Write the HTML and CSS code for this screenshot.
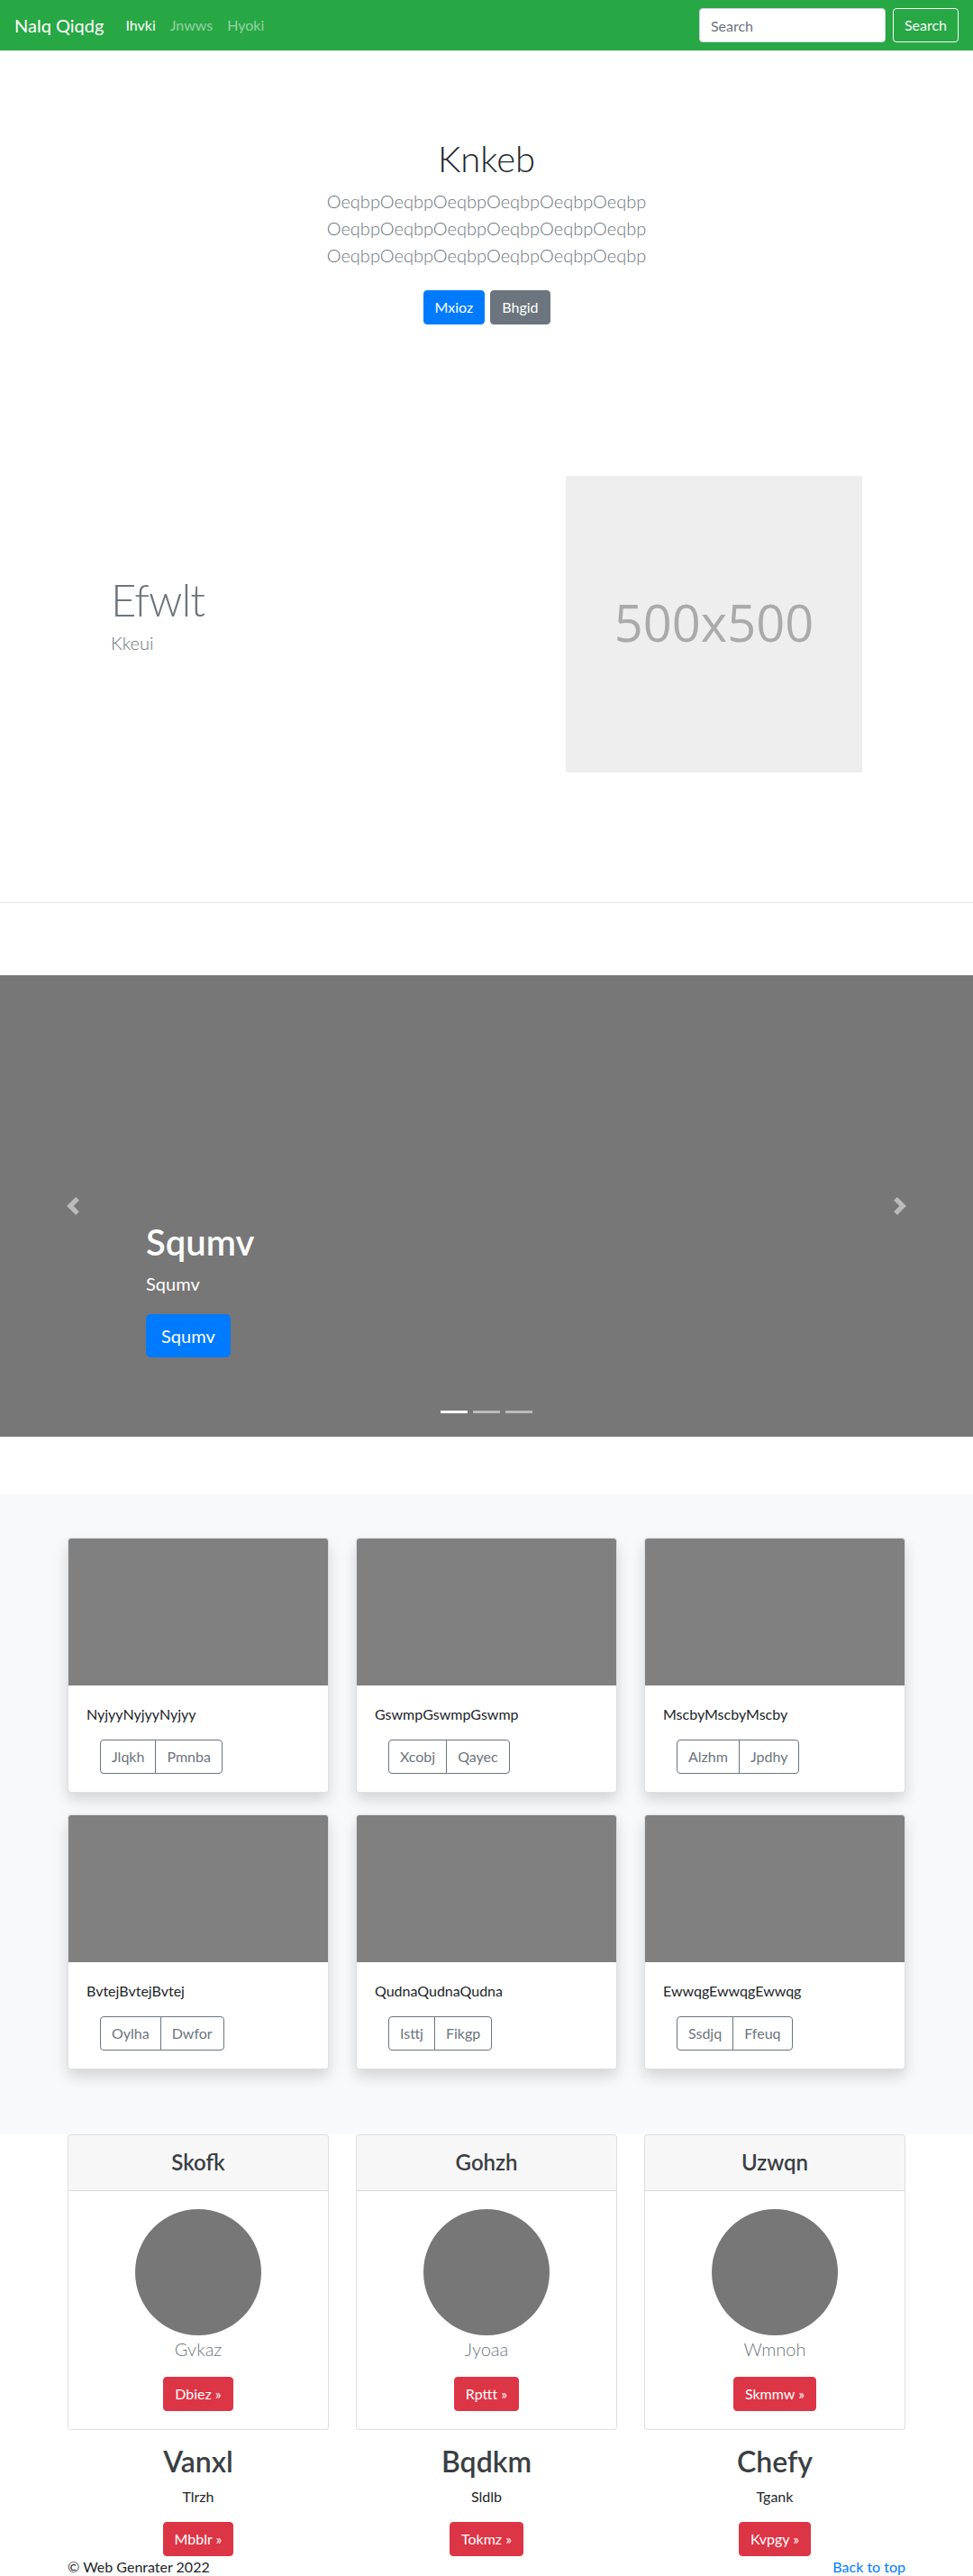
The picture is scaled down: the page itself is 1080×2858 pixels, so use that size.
FILE: index.html
```html
<!DOCTYPE html>
<html lang="en">
<head>
<meta charset="utf-8">
<title>Nalq Qiqdg</title>
<link rel="stylesheet" href="styles.css">
</head>
<body>
<header class="navbar">
  <a class="brand" href="#">Nalq Qiqdg</a>
  <ul class="nav">
    <li><a class="nav-link active" href="#">Ihvki</a></li>
    <li><a class="nav-link" href="#">Jnwws</a></li>
    <li><a class="nav-link" href="#">Hyoki</a></li>
  </ul>
  <form class="search">
    <input class="search-input" type="text" placeholder="Search">
    <button class="btn btn-outline-light" type="button">Search</button>
  </form>
</header>

<main>
  <section class="hero">
    <div class="hero-inner">
      <h1 class="hero-title">Knkeb</h1>
      <p class="lead muted hero-lead">OeqbpOeqbpOeqbpOeqbpOeqbpOeqbp<br>OeqbpOeqbpOeqbpOeqbpOeqbpOeqbp<br>OeqbpOeqbpOeqbpOeqbpOeqbpOeqbp</p>
      <p class="hero-actions"><a class="btn btn-primary" href="#">Mxioz</a><a class="btn btn-secondary" href="#">Bhgid</a></p>
    </div>
  </section>

  <div class="container">
    <div class="feature-row">
      <div class="feature-text">
        <h2 class="feature-title">Efwlt</h2>
        <p class="lead muted feature-lead">Kkeui</p>
      </div>
      <div class="feature-media">
        <svg class="placeholder-img" width="329" height="329" viewBox="0 0 329 329" role="img" aria-label="500x500">
          <rect width="100%" height="100%" fill="#eeeeee"></rect>
          <text x="50%" y="50%" fill="#aaaaaa" text-anchor="middle" dy=".35em" font-family="Open Sans, Lato, sans-serif" font-size="56">500x500</text>
        </svg>
      </div>
    </div>
  </div>
  <hr class="divider">

  <div class="carousel">
    <ol class="indicators">
      <li class="active"></li>
      <li></li>
      <li></li>
    </ol>
    <a class="carousel-control prev" href="#">
      <svg viewBox="0 0 8 8" width="20" height="20"><path fill="#fff" d="M5.25 0l-4 4 4 4 1.5-1.5L4.25 4l2.5-2.5L5.25 0z"/></svg>
    </a>
    <div class="carousel-caption">
      <h1>Squmv</h1>
      <p>Squmv</p>
      <p class="caption-action"><a class="btn btn-lg btn-primary" href="#">Squmv</a></p>
    </div>
    <a class="carousel-control next" href="#">
      <svg viewBox="0 0 8 8" width="20" height="20"><path fill="#fff" d="M2.75 0l-1.5 1.5L3.75 4l-2.5 2.5L2.75 8l4-4-4-4z"/></svg>
    </a>
  </div>

  <div class="album">
    <div class="container">
      <div class="album-grid">
        <div class="card album-card">
          <div class="card-img"></div>
          <div class="card-body">
            <p class="card-text">NyjyyNyjyyNyjyy</p>
            <div class="btn-group"><button class="btn btn-outline-secondary" type="button">Jlqkh</button><button class="btn btn-outline-secondary" type="button">Pmnba</button></div>
          </div>
        </div>
        <div class="card album-card">
          <div class="card-img"></div>
          <div class="card-body">
            <p class="card-text">GswmpGswmpGswmp</p>
            <div class="btn-group"><button class="btn btn-outline-secondary" type="button">Xcobj</button><button class="btn btn-outline-secondary" type="button">Qayec</button></div>
          </div>
        </div>
        <div class="card album-card">
          <div class="card-img"></div>
          <div class="card-body">
            <p class="card-text">MscbyMscbyMscby</p>
            <div class="btn-group"><button class="btn btn-outline-secondary" type="button">Alzhm</button><button class="btn btn-outline-secondary" type="button">Jpdhy</button></div>
          </div>
        </div>
        <div class="card album-card">
          <div class="card-img"></div>
          <div class="card-body">
            <p class="card-text">BvtejBvtejBvtej</p>
            <div class="btn-group"><button class="btn btn-outline-secondary" type="button">Oylha</button><button class="btn btn-outline-secondary" type="button">Dwfor</button></div>
          </div>
        </div>
        <div class="card album-card">
          <div class="card-img"></div>
          <div class="card-body">
            <p class="card-text">QudnaQudnaQudna</p>
            <div class="btn-group"><button class="btn btn-outline-secondary" type="button">Isttj</button><button class="btn btn-outline-secondary" type="button">Fikgp</button></div>
          </div>
        </div>
        <div class="card album-card">
          <div class="card-img"></div>
          <div class="card-body">
            <p class="card-text">EwwqgEwwqgEwwqg</p>
            <div class="btn-group"><button class="btn btn-outline-secondary" type="button">Ssdjq</button><button class="btn btn-outline-secondary" type="button">Ffeuq</button></div>
          </div>
        </div>
      </div>
    </div>
  </div>

  <div class="container">
    <div class="pricing">
      <div class="card">
        <div class="card-header"><h4>Skofk</h4></div>
        <div class="card-body">
          <div class="circle"></div>
          <p class="lead muted">Gvkaz</p>
          <a class="btn btn-danger" href="#">Dbiez &raquo;</a>
        </div>
      </div>
      <div class="card">
        <div class="card-header"><h4>Gohzh</h4></div>
        <div class="card-body">
          <div class="circle"></div>
          <p class="lead muted">Jyoaa</p>
          <a class="btn btn-danger" href="#">Rpttt &raquo;</a>
        </div>
      </div>
      <div class="card">
        <div class="card-header"><h4>Uzwqn</h4></div>
        <div class="card-body">
          <div class="circle"></div>
          <p class="lead muted">Wmnoh</p>
          <a class="btn btn-danger" href="#">Skmmw &raquo;</a>
        </div>
      </div>
    </div>

    <div class="marketing">
      <div class="mk-col">
        <h2>Vanxl</h2>
        <p>Tlrzh</p>
        <p class="mk-action"><a class="btn btn-danger" href="#">Mbblr &raquo;</a></p>
      </div>
      <div class="mk-col">
        <h2>Bqdkm</h2>
        <p>Sldlb</p>
        <p class="mk-action"><a class="btn btn-danger" href="#">Tokmz &raquo;</a></p>
      </div>
      <div class="mk-col">
        <h2>Chefy</h2>
        <p>Tgank</p>
        <p class="mk-action"><a class="btn btn-danger" href="#">Kvpgy &raquo;</a></p>
      </div>
    </div>
  </div>
</main>

<footer class="container footer">
  <p>&copy; Web Genrater 2022</p>
  <p><a href="#">Back to top</a></p>
</footer>
</body>
</html>
```

FILE: styles.css
```css
* {
  box-sizing: border-box;
}

html,
body {
  margin: 0;
}

body {
  font-family: Lato, "Open Sans", "Noto Sans", sans-serif;
  font-size: 16px;
  line-height: 1.5;
  color: #212529;
  background: #fff;
}

a {
  text-decoration: none;
}

/* ---------- navbar ---------- */
.navbar {
  display: flex;
  align-items: center;
  height: 56px;
  padding: 8px 16px;
  background: #28a745;
}

.brand {
  font-size: 20px;
  line-height: 30px;
  padding: 5px 0;
  margin-right: 16px;
  color: #fff;
}

.nav {
  display: flex;
  flex: 1;
  list-style: none;
  margin: 0;
  padding: 0;
}

.nav-link {
  display: block;
  padding: 8px;
  color: rgba(255, 255, 255, 0.5);
}

.nav-link.active {
  color: #fff;
}

.search {
  display: flex;
  align-items: center;
  margin: 0;
}

.search-input {
  width: 207px;
  height: 38px;
  margin-right: 8px;
  padding: 6px 12px;
  font-family: inherit;
  font-size: 16px;
  color: #495057;
  background: #fff;
  border: 1px solid #ced4da;
  border-radius: 4px;
}

.search-input::placeholder {
  color: #6c757d;
}

/* ---------- buttons ---------- */
.btn {
  display: inline-block;
  padding: 6px 12px;
  font-family: inherit;
  font-size: 16px;
  font-weight: 400;
  line-height: 24px;
  text-align: center;
  vertical-align: middle;
  border: 1px solid transparent;
  border-radius: 4px;
  background: transparent;
  cursor: pointer;
}

.btn-outline-light {
  color: #f8f9fa;
  border-color: #f8f9fa;
}

.btn-primary {
  color: #fff;
  background: #007bff;
  border-color: #007bff;
}

.btn-secondary {
  color: #fff;
  background: #6c757d;
  border-color: #6c757d;
}

.btn-danger {
  color: #fff;
  background: #dc3545;
  border-color: #dc3545;
}

.btn-outline-secondary {
  color: #6c757d;
  border-color: #6c757d;
}

.btn-lg {
  padding: 8px 16px;
  font-size: 20px;
  line-height: 30px;
  border-radius: 5px;
}

/* ---------- hero ---------- */
.lead {
  font-size: 20px;
  font-weight: 300;
}

.muted {
  color: #6c757d;
}

.hero {
  padding: 96px 0;
  text-align: center;
}

.hero-inner {
  max-width: 640px;
  margin: 0 auto;
  padding: 0 15px;
}

.hero-title {
  margin: 0 0 8px;
  font-size: 40px;
  font-weight: 300;
  line-height: 1.2;
}

.hero-lead {
  margin: 0 0 16px;
}

.hero-actions {
  display: flex;
  justify-content: center;
  gap: 6px;
  margin: 0;
}

.hero-actions .btn {
  margin: 8px 0;
}

/* ---------- featurette ---------- */
.container {
  width: 960px;
  margin: 0 auto;
  padding: 0 15px;
}

.feature-row {
  display: grid;
  grid-template-columns: 1fr 1fr;
  column-gap: 30px;
  align-items: center;
  padding: 64px 0;
}

.feature-text {
  padding-left: 48px;
}

.feature-title {
  margin: 0 0 8px;
  font-size: 49px;
  font-weight: 300;
  line-height: 1;
  letter-spacing: -1px;
  color: #6c757d;
}

.feature-lead {
  margin: 0 0 16px;
}

.feature-media {
  display: flex;
  justify-content: flex-end;
  padding-right: 48px;
}

.placeholder-img {
  display: block;
  width: 329px;
  height: 329px;
}

.divider {
  height: 0;
  margin: 80px 0;
  border: 0;
  border-top: 1px solid rgba(0, 0, 0, 0.1);
}

/* ---------- carousel ---------- */
.carousel {
  position: relative;
  height: 512px;
  margin-bottom: 64px;
  background: #777;
  overflow: hidden;
}

.carousel-caption {
  position: absolute;
  left: 15%;
  right: 15%;
  bottom: 48px;
  padding: 20px 0;
  color: #fff;
  z-index: 2;
}

.carousel-caption h1 {
  margin: 0 0 8px;
  font-size: 40px;
  font-weight: 600;
  line-height: 1.2;
}

.carousel-caption p {
  margin: 0 0 20px;
  font-size: 20px;
  line-height: 1.4;
}

.carousel-control {
  position: absolute;
  top: 0;
  bottom: 0;
  width: 15%;
  display: flex;
  align-items: center;
  justify-content: center;
  opacity: 0.5;
  z-index: 1;
}

.carousel-control.prev {
  left: 0;
}

.carousel-control.next {
  right: 0;
}

.carousel-control svg {
  display: block;
  width: 20px;
  height: 20px;
}

.indicators {
  position: absolute;
  left: 15%;
  right: 15%;
  bottom: 0;
  display: flex;
  justify-content: center;
  margin: 0 0 16px;
  padding: 0;
  list-style: none;
  z-index: 3;
}

.indicators li {
  box-sizing: content-box;
  width: 30px;
  height: 3px;
  margin: 0 3px;
  border-top: 10px solid transparent;
  border-bottom: 10px solid transparent;
  background: #fff;
  background-clip: padding-box;
  opacity: 0.5;
}

.indicators li.active {
  opacity: 1;
}

/* ---------- album ---------- */
.album {
  padding: 48px 0;
  background: #f8f9fa;
}

.album-grid {
  display: grid;
  grid-template-columns: repeat(3, 1fr);
  column-gap: 30px;
}

.card {
  background: #fff;
  border: 1px solid rgba(0, 0, 0, 0.125);
  border-radius: 4px;
  overflow: hidden;
}

.album-card {
  margin-bottom: 24px;
  box-shadow: 0 8px 16px rgba(0, 0, 0, 0.15);
}

.card-img {
  height: 163px;
  background: #808080;
}

.card-body {
  padding: 20px;
}

.card-text {
  margin: 0 0 16px;
}

.btn-group {
  display: inline-flex;
  margin-left: 15px;
}

.btn-group .btn:first-child {
  border-top-right-radius: 0;
  border-bottom-right-radius: 0;
}

.btn-group .btn + .btn {
  margin-left: -1px;
  border-top-left-radius: 0;
  border-bottom-left-radius: 0;
}

/* ---------- pricing ---------- */
.pricing {
  display: grid;
  grid-template-columns: repeat(3, 1fr);
  column-gap: 30px;
  margin-bottom: 16px;
  text-align: center;
}

.card-header {
  padding: 16px 20px;
  background: rgba(0, 0, 0, 0.03);
  border-bottom: 1px solid rgba(0, 0, 0, 0.125);
}

.card-header h4 {
  margin: 0;
  font-size: 24px;
  font-weight: 600;
  line-height: 1.2;
  color: #3a3f44;
}

.circle {
  width: 140px;
  height: 140px;
  margin: 0 auto;
  border-radius: 50%;
  background: #777;
}

.pricing .lead {
  margin: 0 0 16px;
}

/* ---------- marketing ---------- */
.marketing {
  display: grid;
  grid-template-columns: repeat(3, 1fr);
  column-gap: 30px;
  text-align: center;
}

.marketing h2 {
  margin: 0 0 8px;
  font-size: 32px;
  font-weight: 600;
  line-height: 1.2;
  color: #3a3f44;
}

.marketing p {
  margin: 0 0 16px;
}

.marketing .mk-action {
  margin: 0;
}

/* ---------- footer ---------- */
.footer {
  display: flex;
  justify-content: space-between;
}

.footer p {
  margin: 0;
}

.footer a {
  color: #007bff;
}
```
